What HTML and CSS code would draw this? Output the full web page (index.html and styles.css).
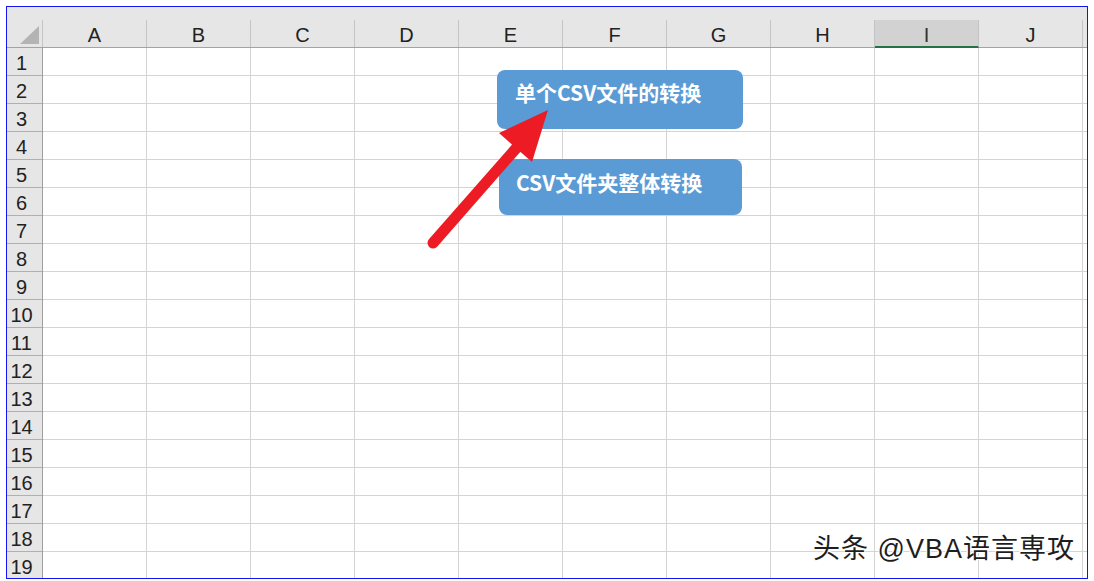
FILE: index.html
```html
<!DOCTYPE html>
<html lang="zh-CN">
<head>
    <meta charset="UTF-8">
    <meta name="viewport" content="width=device-width, initial-scale=1.0">
    <title>CSV转换</title>
    <link rel="stylesheet" href="styles.css">
</head>
<body>

    <div class="sheet">
        <div class="col-head">
            <div class="corner"><span class="corner-mark"></span></div>
            <div class="col">A</div>
            <div class="col">B</div>
            <div class="col">C</div>
            <div class="col">D</div>
            <div class="col">E</div>
            <div class="col">F</div>
            <div class="col">G</div>
            <div class="col">H</div>
            <div class="col active">I</div>
            <div class="col">J</div>
            <div class="col rest"></div>
        </div>

        <div class="body">
            <div class="row-head">
                <div class="rn">1</div>
                <div class="rn">2</div>
                <div class="rn">3</div>
                <div class="rn">4</div>
                <div class="rn">5</div>
                <div class="rn">6</div>
                <div class="rn">7</div>
                <div class="rn">8</div>
                <div class="rn">9</div>
                <div class="rn">10</div>
                <div class="rn">11</div>
                <div class="rn">12</div>
                <div class="rn">13</div>
                <div class="rn">14</div>
                <div class="rn">15</div>
                <div class="rn">16</div>
                <div class="rn">17</div>
                <div class="rn">18</div>
                <div class="rn">19</div>
            </div>

            <div class="cells">
                <button type="button" class="shape-btn btn-single">单个CSV文件的转换</button>
                <button type="button" class="shape-btn btn-folder">CSV文件夹整体转换</button>

                <svg class="arrow" width="600" height="260" viewBox="0 0 600 260">
                    <line x1="390" y1="195" x2="476" y2="97" stroke="#ed1c24" stroke-width="11" stroke-linecap="round" />
                    <polygon points="505,62 456,85 489,114" fill="#ed1c24" />
                </svg>

                <div class="watermark">头条 @VBA语言専攻</div>
            </div>
        </div>
    </div>

</body>
</html>
```

FILE: styles.css
```css
body {
    margin: 0;
    padding: 6px;
    background-color: #ffffff;
    font-family: "Liberation Sans", Arial, sans-serif;
}
.sheet {
    width: 1080px;
    height: 571px;
    border: 1px solid #1414f0;
    overflow: hidden;
    background: #ffffff;
}

/* column header strip */
.col-head {
    display: flex;
    align-items: flex-end;
    height: 40px;
    background-color: #e6e6e6;
    border-bottom: 1px solid #a3a3a3;
}
.corner {
    width: 35px;
    height: 27px;
    border-right: 1px solid #c4c4c4;
    display: flex;
    justify-content: flex-end;
    align-items: flex-end;
}
.corner-mark {
    width: 19px;
    height: 18px;
    margin: 0 3px 3px 0;
    background-color: #b4b4b4;
    clip-path: polygon(100% 0, 100% 100%, 0 100%);
}
.col {
    width: 103px;
    height: 27px;
    border-right: 1px solid #c4c4c4;
    font-size: 20px;
    line-height: 31px;
    text-align: center;
    color: #222;
}
.col.active {
    height: 26px;
    background-color: #d2d2d2;
    border-bottom: 2px solid #217346;
    margin-bottom: -1px;
    color: #333;
}
.col.rest {
    flex: 1;
    border-right: none;
}

/* rows */
.body {
    display: flex;
}
.row-head {
    width: 35px;
    border-right: 1px solid #9e9e9e;
    background-color: #e6e6e6;
}
.rn {
    height: 27px;
    border-bottom: 1px solid #b0b0b0;
    font-size: 20px;
    line-height: 30px;
    text-align: center;
    padding-right: 6px;
    color: #222;
}
.cells {
    position: relative;
    flex: 1;
    height: 532px;
    background-image:
        linear-gradient(to right, transparent 103px, #d4d4d4 103px),
        linear-gradient(to bottom, transparent 27px, #d4d4d4 27px);
    background-size: 104px 100%, 100% 28px;
}

/* shapes drawn over the grid */
.shape-btn {
    position: absolute;
    box-sizing: border-box;
    padding: 0 0 0 18px;
    border: none;
    border-radius: 8px;
    background-color: #5b9bd5;
    color: #ffffff;
    font-family: "Noto Sans CJK SC", "Noto Sans", sans-serif;
    font-weight: bold;
    font-size: 21px;
    line-height: 25px;
    text-align: left;
}
.btn-single {
    left: 454px;
    top: 22px;
    width: 246px;
    height: 59px;
    padding-top: 10px;
    padding-bottom: 24px;
}
.btn-folder {
    left: 456px;
    top: 111px;
    width: 243px;
    height: 56px;
    padding-left: 17px;
    padding-top: 11px;
    padding-bottom: 20px;
}
.arrow {
    position: absolute;
    left: 0;
    top: 0;
}
.watermark {
    position: absolute;
    left: 770px;
    top: 486px;
    font-family: "Liberation Sans", "Noto Sans CJK SC", sans-serif;
    font-size: 27px;
    line-height: 30px;
    letter-spacing: 1px;
    color: #1e1e1e;
    text-shadow: 1px 1px 0 #fff, -1px -1px 0 #fff, 1px -1px 0 #fff, -1px 1px 0 #fff;
}
```
